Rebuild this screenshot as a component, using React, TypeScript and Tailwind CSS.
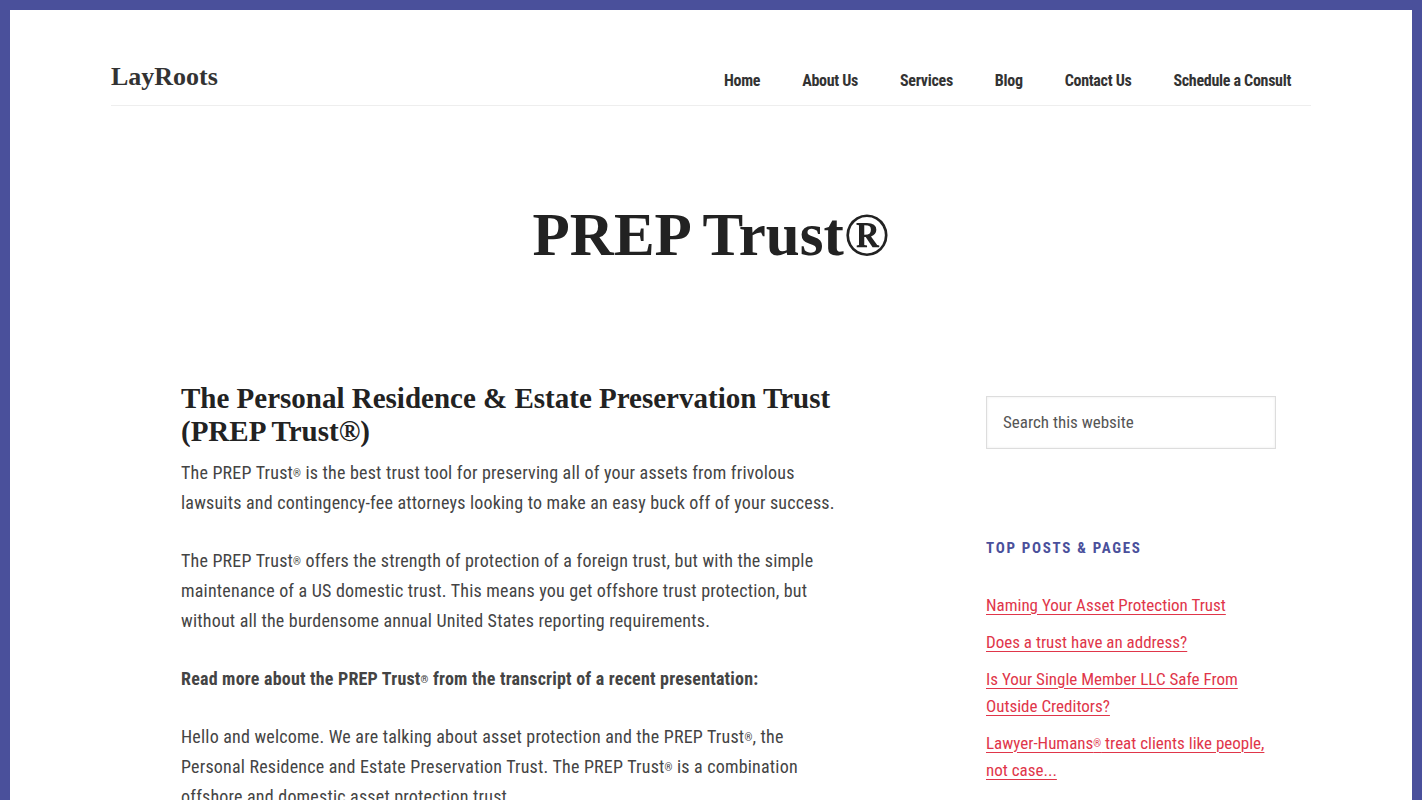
const navItems = ['Home', 'About Us', 'Services', 'Blog', 'Contact Us', 'Schedule a Consult'];

const serif = "font-['Liberation_Serif','Times_New_Roman',serif]";
const sans = "font-['Liberation_Sans_Narrow','Roboto_Condensed','Roboto',sans-serif]";

const Reg = () => <sup className="text-[10px] relative -top-[2px]">®</sup>;

const topPosts = [
  { id: 1, lines: [<>Naming Your Asset Protection Trust</>] },
  { id: 2, lines: [<>Does a trust have an address?</>] },
  { id: 3, lines: [<>Is Your Single Member LLC Safe From</>, <>Outside Creditors?</>] },
  { id: 4, lines: [<>Lawyer-Humans<Reg /> treat clients like people,</>, <>not case...</>] },
];

const App = () => {
  return (
    <div className="min-h-screen bg-[#4a509b] p-[10px]">
      <div className="bg-white min-h-[790px]">
        <header className="mx-auto w-[1200px] flex items-end justify-between border-b border-[#eeeeee] pt-[54px] pb-[12px]">
          <a className={`${serif} text-[26px] font-bold text-[#333333] leading-none mb-[3px]`}>LayRoots</a>
          <nav className={`${sans} flex`}>
            {navItems.map((item) => (
              <a key={item} className="px-[21px] last:pr-[20px] text-[16px] font-bold text-[#333333] tracking-[-0.3px]">
                {item}
              </a>
            ))}
          </nav>
        </header>

        <h1 className={`${serif} text-center text-[61px] font-bold text-[#222222] leading-none pt-[98px] pb-[108px]`}>
          PREP Trust®
        </h1>

        <div className="mx-auto w-[1200px] flex pl-[70px]">
          <main className={`w-[660px] ${sans} text-[18px] leading-[30px] text-[#444444] tracking-[0.2px]`}>
            <h2 className={`${serif} text-[29px] font-bold text-[#222222] leading-[33px] tracking-normal mt-[9px] mb-[10px]`}>
              The Personal Residence &amp; Estate Preservation Trust
              <br />
              (PREP Trust®)
            </h2>
            <p className="mb-[28px] whitespace-nowrap">
              The PREP Trust<Reg /> is the best trust tool for preserving all of your assets from frivolous
              <br />
              lawsuits and contingency-fee attorneys looking to make an easy buck off of your success.
            </p>
            <p className="mb-[28px] whitespace-nowrap">
              The PREP Trust<Reg /> offers the strength of protection of a foreign trust, but with the simple
              <br />
              maintenance of a US domestic trust. This means you get offshore trust protection, but
              <br />
              without all the burdensome annual United States reporting requirements.
            </p>
            <p className="mb-[28px] font-bold whitespace-nowrap">
              Read more about the PREP Trust<Reg /> from the transcript of a recent presentation:
            </p>
            <p className="whitespace-nowrap">
              Hello and welcome. We are talking about asset protection and the PREP Trust<Reg />, the
              <br />
              Personal Residence and Estate Preservation Trust. The PREP Trust<Reg /> is a combination
              <br />
              offshore and domestic asset protection trust.
            </p>
          </main>

          <aside className={`ml-[145px] w-[290px] ${sans}`}>
            <div className="mt-[23px] h-[53px] border border-[#dddddd] shadow-[inset_0_0_3px_rgba(0,0,0,0.08)] flex items-center px-[16px]">
              <span className="text-[17px] text-[#555555]">Search this website</span>
            </div>

            <h4 className="mt-[88px] text-[15px] font-bold tracking-[1.7px] uppercase text-[#4a509b]">
              Top Posts &amp; Pages
            </h4>

            <ul className="mt-[32px] flex flex-col gap-[10px]">
              {topPosts.map((post) => (
                <li key={post.id} className="text-[17px] leading-[27px] text-[#e0364a]">
                  {post.lines.map((line, i) => (
                    <span key={i}>
                      <a className="underline underline-offset-[3px] decoration-1">{line}</a>
                      {i < post.lines.length - 1 && <br />}
                    </span>
                  ))}
                </li>
              ))}
            </ul>
          </aside>
        </div>
      </div>
    </div>
  );
};

export default App;
